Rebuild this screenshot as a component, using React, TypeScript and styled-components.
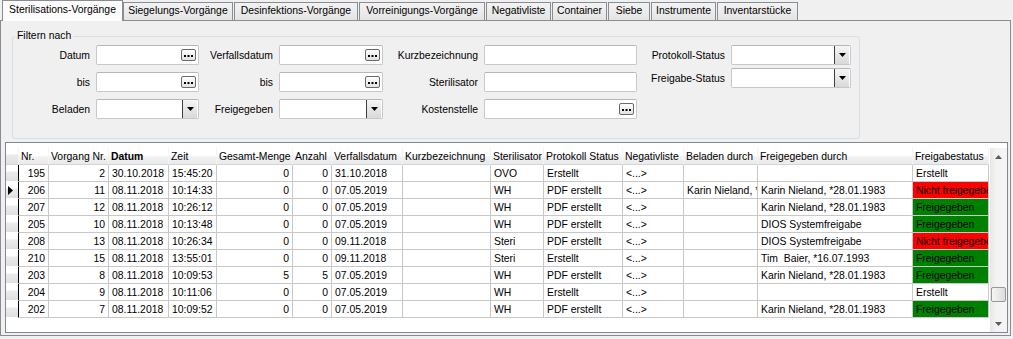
import React from 'react';
import styled, { createGlobalStyle, css } from 'styled-components';

const GlobalStyle = createGlobalStyle`
  html, body { margin: 0; padding: 0; background: #f0f0f0; }
  body {
    font-family: "Liberation Sans", Arial, sans-serif;
    font-size: 10.4px;
    color: #000;
  }
  * { box-sizing: border-box; }
`;

const Window = styled.div`
  width: 1013px;
  height: 339px;
  overflow: hidden;
  background: #f0f0f0;
`;

/* ---------- Tabs ---------- */
const TabStrip = styled.div`
  display: flex;
  align-items: flex-end;
  height: 20px;
  padding-left: 2px;
`;

const Tab = styled.div<{ $active?: boolean; $w: number }>`
  width: ${(p) => p.$w}px;
  height: 18px;
  padding-bottom: 1px;
  margin-right: 1px;
  border: 1px solid #898c95;
  border-bottom: none;
  background: linear-gradient(#f3f3f3, #e4e4e4);
  display: flex;
  align-items: center;
  justify-content: center;
  white-space: nowrap;
  line-height: 1;
  ${(p) =>
    p.$active &&
    css`
      height: 21px;
      margin-right: 0;
      margin-bottom: -1px;
      padding-bottom: 2px;
      background: #fcfcfc;
      position: relative;
      z-index: 1;
    `}
`;

const Panel = styled.div`
  width: 1011px;
  height: 316px;
  border: 1px solid #898c95;
  background: #f0f0f0;
  padding: 0 2px 2px 4px;
  display: flex;
  flex-direction: column;
`;

/* ---------- Filter ---------- */
const FilterGroup = styled.fieldset`
  margin: 9px 0 3px 7px;
  padding: 3px 0 0 0;
  width: 848px;
  height: 109px;
  border: 1px solid #d5dfe5;
  border-radius: 3px;
  display: flex;
  align-items: flex-start;
  min-inline-size: 0;
`;

const Legend = styled.legend`
  margin-left: 2px;
  padding: 0 2px;
  line-height: 12px;
`;

const FilterColumn = styled.div<{ $label: number; $input: number; $gap: number }>`
  display: grid;
  grid-template-columns: ${(p) => p.$label}px ${(p) => p.$input}px;
  grid-auto-rows: 20px;
  column-gap: 6px;
  row-gap: ${(p) => p.$gap}px;
`;

const FieldLabel = styled.label`
  display: flex;
  align-items: center;
  justify-content: flex-end;
  white-space: nowrap;
`;

const TextBox = styled.div`
  background: #fff;
  border: 1px solid #c6c8cc;
  border-top-color: #b4b6ba;
  border-radius: 2px;
  display: flex;
  align-items: center;
  justify-content: flex-end;
  padding-right: 1px;
`;

const EllipsisButton = styled.div`
  width: 15px;
  height: 12px;
  margin-right: 1px;
  border: 1px solid #6a6a6a;
  border-radius: 2px;
  background: linear-gradient(#ffffff, #e2e2e2);
  display: flex;
  align-items: center;
  justify-content: center;
`;

const ComboButton = styled.div`
  width: 15px;
  height: 18px;
  border-left: 1px solid #3f3f3f;
  background: linear-gradient(#f5f5f5, #d9d9d9);
  display: flex;
  align-items: center;
  justify-content: center;
`;

const Dots = () => (
  <svg width="9" height="6" viewBox="0 0 9 6">
    <rect x="0" y="3" width="2" height="2" fill="#000" />
    <rect x="3.5" y="3" width="2" height="2" fill="#000" />
    <rect x="7" y="3" width="2" height="2" fill="#000" />
  </svg>
);

const DownTriangle = ({ color = '#000' }: { color?: string }) => (
  <svg width="7" height="4" viewBox="0 0 7 4">
    <path d="M0 0 H7 L3.5 4 Z" fill={color} />
  </svg>
);

const UpTriangle = ({ color = '#000' }: { color?: string }) => (
  <svg width="7" height="4" viewBox="0 0 7 4">
    <path d="M0 4 H7 L3.5 0 Z" fill={color} />
  </svg>
);

type FieldKind = 'ellipsis' | 'combo' | 'text';
type Field = { label: string; kind: FieldKind };

const filterColumns: { label: number; input: number; gap: number; fields: Field[] }[] = [
  {
    label: 77,
    input: 103,
    gap: 7,
    fields: [
      { label: 'Datum', kind: 'ellipsis' },
      { label: 'bis', kind: 'ellipsis' },
      { label: 'Beladen', kind: 'combo' },
    ],
  },
  {
    label: 74,
    input: 104,
    gap: 7,
    fields: [
      { label: 'Verfallsdatum', kind: 'ellipsis' },
      { label: 'bis', kind: 'ellipsis' },
      { label: 'Freigegeben', kind: 'combo' },
    ],
  },
  {
    label: 95,
    input: 153,
    gap: 7,
    fields: [
      { label: 'Kurzbezeichnung', kind: 'text' },
      { label: 'Sterilisator', kind: 'text' },
      { label: 'Kostenstelle', kind: 'ellipsis' },
    ],
  },
  {
    label: 88,
    input: 120,
    gap: 3,
    fields: [
      { label: 'Protokoll-Status', kind: 'combo' },
      { label: 'Freigabe-Status', kind: 'combo' },
    ],
  },
];

/* ---------- Grid ---------- */
const COLS = '13px 30px 60px 60px 48px 76px 39px 71px 88px 53px 79px 61px 74px 155px 76px';

const GridBox = styled.div`
  height: 191px;
  border: 1px solid #828790;
  background: #fff;
  padding-top: 5px;
  display: flex;
`;

const Table = styled.div`
  flex: 1;
  display: flex;
  flex-direction: column;
  overflow: hidden;
`;

const Row = styled.div`
  display: grid;
  grid-template-columns: ${COLS};
  height: 17px;
  flex: none;
`;

const HeaderCell = styled.div<{ $bold?: boolean }>`
  display: flex;
  align-items: center;
  padding-left: 2px;
  white-space: nowrap;
  overflow: hidden;
  font-weight: ${(p) => (p.$bold ? 700 : 400)};
  background: linear-gradient(#ffffff 0%, #ffffff 45%, #f1f2f3 55%, #e9eaeb 100%);
  border-right: 1px solid #f4f4f4;
  border-bottom: 1px solid #d5d5d5;
`;

const RowHeader = styled.div<{ $head?: boolean }>`
  display: flex;
  align-items: center;
  padding-left: 2px;
  background: linear-gradient(#ffffff 0%, #ffffff 35%, #ebebeb 45%, #e0e0e0 100%);
  border-bottom: 1px solid #fff;
  border-right: 1px solid #000;
  ${(p) =>
    p.$head &&
    css`
      border-right: 1px solid #f4f4f4;
      border-bottom: 1px solid #d5d5d5;
    `}
`;

const Cell = styled.div<{ $align?: 'left' | 'right'; $bg?: string }>`
  display: flex;
  align-items: center;
  justify-content: ${(p) => (p.$align === 'right' ? 'flex-end' : 'flex-start')};
  padding: ${(p) => (p.$align === 'right' ? '0 3px 0 2px' : '0 2px 0 3px')};
  border-right: 1px solid #c8c8c8;
  border-bottom: 1px solid #c8c8c8;
  background: ${(p) => p.$bg ?? '#fff'};
  white-space: nowrap;
  overflow: hidden;
`;

const ScrollBar = styled.div`
  width: 17px;
  flex: none;
  display: flex;
  flex-direction: column;
  background: linear-gradient(to right, #e7e7e7, #f3f3f3 35%, #f5f5f5);
`;

const ScrollButton = styled.div`
  height: 17px;
  flex: none;
  display: flex;
  align-items: center;
  justify-content: center;
`;

const Track = styled.div`
  flex: 1;
  display: flex;
  flex-direction: column;
  padding: 0 1px;
`;

const Thumb = styled.div`
  height: 15px;
  flex: none;
  border: 1px solid #979797;
  border-radius: 2px;
  background: linear-gradient(to right, #f6f6f6, #e9e9e9 50%, #dcdcdc);
`;

type Status = 'erstellt' | 'nicht' | 'frei';

const statusInfo: Record<Status, { text: string; bg: string }> = {
  erstellt: { text: 'Erstellt', bg: '#ffffff' },
  nicht: { text: 'Nicht freigegeben', bg: '#ff0000' },
  frei: { text: 'Freigegeben', bg: '#008000' },
};

type Col = { key: string; title: string; align?: 'left' | 'right'; bold?: boolean };

const columns: Col[] = [
  { key: 'nr', title: 'Nr.', align: 'right' },
  { key: 'vorgang', title: 'Vorgang Nr.', align: 'right' },
  { key: 'datum', title: 'Datum', bold: true },
  { key: 'zeit', title: 'Zeit' },
  { key: 'menge', title: 'Gesamt-Menge', align: 'right' },
  { key: 'anzahl', title: 'Anzahl', align: 'right' },
  { key: 'verfall', title: 'Verfallsdatum' },
  { key: 'kurz', title: 'Kurzbezeichnung' },
  { key: 'steril', title: 'Sterilisator' },
  { key: 'protokoll', title: 'Protokoll Status' },
  { key: 'negativ', title: 'Negativliste' },
  { key: 'beladen', title: 'Beladen durch' },
  { key: 'freigegeben', title: 'Freigegeben durch' },
];

type DataRow = Record<string, string> & { status: Status; current?: boolean };

const KN = 'Karin Nieland, *28.01.1983';
const DIOS = 'DIOS Systemfreigabe';

const mk = (
  nr: string, vorgang: string, datum: string, zeit: string, menge: string, anzahl: string,
  verfall: string, steril: string, protokoll: string, beladen: string, freigegeben: string,
  status: Status, current = false
): DataRow => ({
  nr, vorgang, datum, zeit, menge, anzahl, verfall, kurz: '', steril, protokoll,
  negativ: '<...>', beladen, freigegeben, status, current,
} as DataRow);

const rows: DataRow[] = [
  mk('195', '2', '30.10.2018', '15:45:20', '0', '0', '31.10.2018', 'OVO', 'Erstellt', '', '', 'erstellt'),
  mk('206', '11', '08.11.2018', '10:14:33', '0', '0', '07.05.2019', 'WH', 'PDF erstellt', KN, KN, 'nicht', true),
  mk('207', '12', '08.11.2018', '10:26:12', '0', '0', '07.05.2019', 'WH', 'PDF erstellt', '', KN, 'frei'),
  mk('205', '10', '08.11.2018', '10:13:48', '0', '0', '07.05.2019', 'WH', 'PDF erstellt', '', DIOS, 'frei'),
  mk('208', '13', '08.11.2018', '10:26:34', '0', '0', '09.11.2018', 'Steri', 'PDF erstellt', '', DIOS, 'nicht'),
  mk('210', '15', '08.11.2018', '13:55:01', '0', '0', '09.11.2018', 'Steri', 'Erstellt', '', 'Tim\u00a0 Baier, *16.07.1993', 'frei'),
  mk('203', '8', '08.11.2018', '10:09:53', '5', '5', '07.05.2019', 'WH', 'PDF erstellt', '', KN, 'frei'),
  mk('204', '9', '08.11.2018', '10:11:06', '0', '0', '07.05.2019', 'WH', 'Erstellt', '', '', 'erstellt'),
  mk('202', '7', '08.11.2018', '10:09:52', '0', '0', '07.05.2019', 'WH', 'PDF erstellt', '', KN, 'frei'),
];

const tabs: { label: string; w: number }[] = [
  { label: 'Sterilisations-Vorgänge', w: 121 },
  { label: 'Siegelungs-Vorgänge', w: 110 },
  { label: 'Desinfektions-Vorgänge', w: 124 },
  { label: 'Vorreinigungs-Vorgänge', w: 126 },
  { label: 'Negativliste', w: 65 },
  { label: 'Container', w: 55 },
  { label: 'Siebe', w: 42 },
  { label: 'Instrumente', w: 65 },
  { label: 'Inventarstücke', w: 81 },
];

const TRACK_H = 150;
const THUMB_H = 15;
const scrollRatio = 0.9;

export default function App() {
  return (
    <Window>
      <GlobalStyle />
      <TabStrip>
        {tabs.map((t, i) => (
          <Tab key={t.label} $active={i === 0} $w={t.w}>
            {t.label}
          </Tab>
        ))}
      </TabStrip>
      <Panel>
        <FilterGroup>
          <Legend>Filtern nach</Legend>
          {filterColumns.map((col, ci) => (
            <FilterColumn key={ci} $label={col.label} $input={col.input} $gap={col.gap}>
              {col.fields.map((f, fi) => (
                <React.Fragment key={fi}>
                  <FieldLabel>{f.label}</FieldLabel>
                  <TextBox>
                    {f.kind === 'ellipsis' && (
                      <EllipsisButton>
                        <Dots />
                      </EllipsisButton>
                    )}
                    {f.kind === 'combo' && (
                      <ComboButton>
                        <DownTriangle />
                      </ComboButton>
                    )}
                  </TextBox>
                </React.Fragment>
              ))}
            </FilterColumn>
          ))}
        </FilterGroup>

        <GridBox>
          <Table>
            <Row>
              <RowHeader $head />
              {columns.map((c) => (
                <HeaderCell key={c.key} $bold={c.bold}>
                  {c.title}
                </HeaderCell>
              ))}
              <HeaderCell>Freigabestatus</HeaderCell>
            </Row>
            {rows.map((r, ri) => (
              <Row key={ri}>
                <RowHeader>
                  {r.current && (
                    <svg width="5" height="9" viewBox="0 0 5 9">
                      <path d="M0 0 L5 4.5 L0 9 Z" fill="#000" />
                    </svg>
                  )}
                </RowHeader>
                {columns.map((c) => (
                  <Cell key={c.key} $align={c.align}>
                    {r[c.key]}
                  </Cell>
                ))}
                <Cell $bg={statusInfo[r.status].bg}>{statusInfo[r.status].text}</Cell>
              </Row>
            ))}
          </Table>
          <ScrollBar>
            <ScrollButton>
              <UpTriangle color="#5b5b5b" />
            </ScrollButton>
            <Track>
              <Thumb style={{ marginTop: `${Math.round(scrollRatio * (TRACK_H - THUMB_H))}px` }} />
            </Track>
            <ScrollButton>
              <DownTriangle color="#5b5b5b" />
            </ScrollButton>
          </ScrollBar>
        </GridBox>
      </Panel>
    </Window>
  );
}
